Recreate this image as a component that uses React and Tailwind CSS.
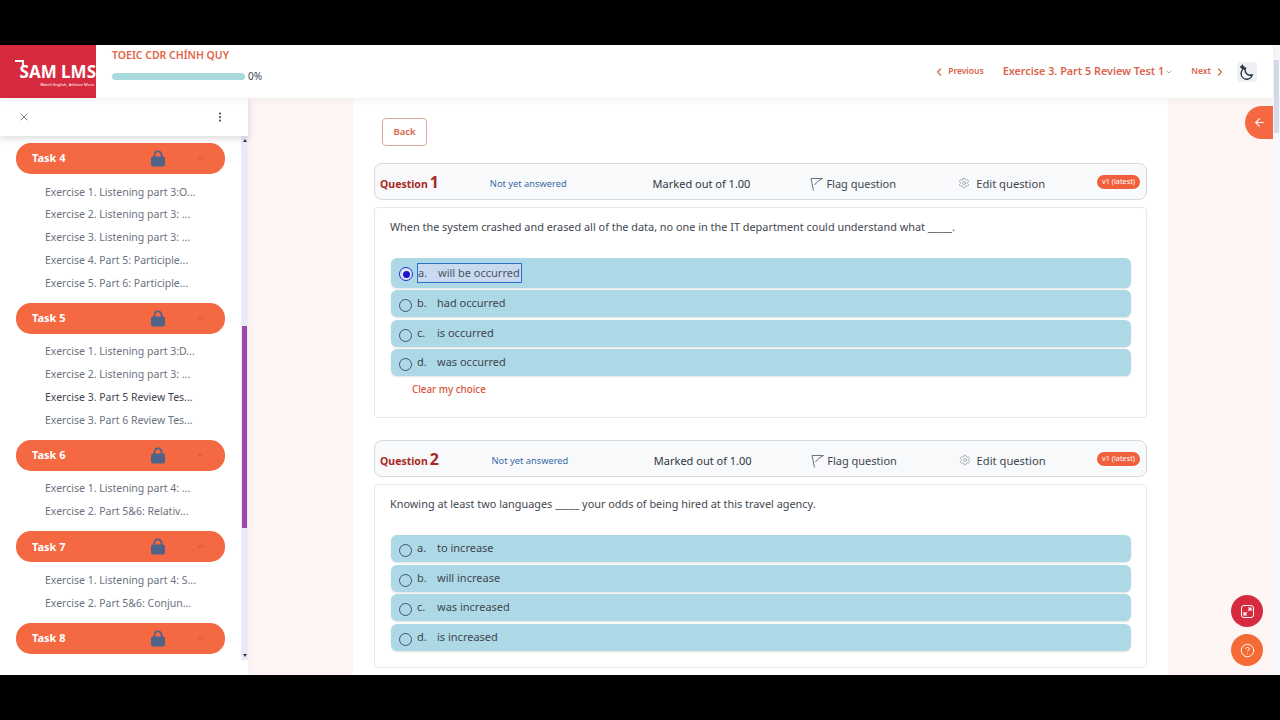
import { ArrowLeft, ChevronDown, ChevronLeft, ChevronRight, ChevronUp, CircleHelp, MoreVertical, Settings, X } from "lucide-react"

const tasks = [
  {
    name: "Task 4",
    items: ["Exercise 1. Listening part 3:O...", "Exercise 2. Listening part 3: ...", "Exercise 3. Listening part 3: ...", "Exercise 4. Part 5: Participle...", "Exercise 5. Part 6: Participle..."],
  },
  {
    name: "Task 5",
    items: ["Exercise 1. Listening part 3:D...", "Exercise 2. Listening part 3: ...", "Exercise 3. Part 5 Review Tes...", "Exercise 3. Part 6 Review Tes..."],
    active: 2,
  },
  { name: "Task 6", items: ["Exercise 1. Listening part 4: ...", "Exercise 2. Part 5&6: Relativ..."] },
  { name: "Task 7", items: ["Exercise 1. Listening part 4: S...", "Exercise 2. Part 5&6: Conjun..."] },
  { name: "Task 8", items: [] },
]

const questions = [
  {
    number: 1,
    text: "When the system crashed and erased all of the data, no one in the IT department could understand what _____.",
    options: ["will be occurred", "had occurred", "is occurred", "was occurred"],
    selected: 0,
  },
  {
    number: 2,
    text: "Knowing at least two languages _____ your odds of being hired at this travel agency.",
    options: ["to increase", "will increase", "was increased", "is increased"],
  },
]

function LockIcon() {
  return (
    <svg width="16" height="17" viewBox="0 0 16 17" fill="#4f6288">
      <path d="M4.5 7V4.8a3.5 3.5 0 0 1 7 0V7" fill="none" stroke="#4f6288" strokeWidth="1.8" />
      <rect x="1" y="6.5" width="14" height="10" rx="2" />
    </svg>
  )
}

function FlagIcon() {
  return (
    <svg width="13" height="14" viewBox="0 0 13 14" fill="none" stroke="#6b7280" strokeWidth="1">
      <path d="M3.5 13.5 1 1.5h11.5L7.5 4.5 4.5 8" />
    </svg>
  )
}

function MoonIcon() {
  return (
    <svg width="16" height="16" viewBox="0 0 24 24" fill="none" stroke="#1f2937" strokeWidth="2" strokeLinecap="round" strokeLinejoin="round">
      <path d="M10 6a7.5 7.5 0 0 0 10 10 8.5 8.5 0 1 1-10-10Z" />
      <path d="M5 2v5M2.5 4.500h5" strokeWidth="2.4" />
    </svg>
  )
}

function Radio({ checked }) {
  if (checked) {
    return (
      <span className="mt-[3px] flex h-[14px] w-[14px] shrink-0 items-center justify-center rounded-full border border-[#1d2bd8] bg-[#dfe6f8]">
        <span className="h-[7px] w-[7px] rounded-full bg-[#1a16c8]" />
      </span>
    )
  }
  return <span className="mt-1 h-[13px] w-[13px] shrink-0 rounded-full border border-[#3f5566]" />
}

function Sidebar() {
  return (
    <aside className="relative z-10 flex w-[248px] shrink-0 flex-col bg-white shadow-[2px_0_8px_rgba(0,0,0,0.04)]">
      <div className="z-10 flex h-[38px] shrink-0 items-center justify-between pl-[18px] pr-[22px] shadow-[0_3px_6px_rgba(0,0,0,0.12)]">
        <X size={12} strokeWidth={1.5} className="text-[#4b5563]" />
        <MoreVertical size={12} strokeWidth={2.5} className="text-[#4b5563]" />
      </div>
      <div className="flex h-[524px] overflow-hidden">
        <div className="w-[241px] shrink-0 pl-4 pr-4 pt-[7px]">
          {tasks.map((task) => (
            <div key={task.name} className="mb-[8px]">
              <div className="flex h-[31px] items-center rounded-[15px] bg-[#f46842] pl-[16px] text-[11px] font-bold text-white">
                <span className="w-[118px]">{task.name}</span>
                <LockIcon />
                <ChevronUp size={11} strokeWidth={2} className="ml-[29px] text-[#b9583c]" />
              </div>
              {task.items.length > 0 && (
                <div className="pl-[29px] pt-[7px]">
                  {task.items.map((item, i) => (
                    <div
                      key={item}
                      className={`flex h-[22.75px] items-center whitespace-nowrap text-[10.5px] ${i === task.active ? "text-[#3f4650]" : "text-[#6b7280]"}`}
                    >
                      {item}
                    </div>
                  ))}
                </div>
              )}
            </div>
          ))}
        </div>
        <div className="relative w-[7px] bg-[#e9e9f8]">
          <div className="absolute left-[2px] top-[3px] h-0 w-0 border-x-[2px] border-b-[3px] border-x-transparent border-b-[#33335a]" />
          <div className="absolute left-px top-[190px] h-[202px] w-[5px] bg-[#9b4aa8]" />
          <div className="absolute bottom-[3px] left-[2px] h-0 w-0 border-x-[2px] border-t-[3px] border-x-transparent border-t-[#33335a]" />
        </div>
      </div>
    </aside>
  )
}

function Question({ q }) {
  return (
    <section className="mb-[22px]">
      <div className="flex h-[37px] items-center rounded-lg border border-[#d5dae1] bg-[#f7f9fb] pl-[5px] pr-[6px] text-[11px] text-[#3f4650]">
        <span className={`flex items-baseline font-bold leading-none text-[#a82a23] ${q.number === 1 ? "w-[110px]" : "w-[112px]"}`}>
          <span className="text-[10.5px]">Question</span>
          <span className="ml-[2px] text-[16px]">{q.number}</span>
        </span>
        <span className="mt-[5px] w-[163px] text-[9.3px] text-[#3b69a8]">Not yet answered</span>
        <span className="mt-[6px] w-[158px] text-[#2f3640]">Marked out of 1.00</span>
        <span className="mt-[5px] flex w-[147px] items-center gap-[3px]">
          <FlagIcon />
          Flag question
        </span>
        <span className="mt-[5px] flex w-[140px] items-center gap-[6px] pl-px text-[11.2px]">
          <Settings size={12} strokeWidth={1} className="-mt-px text-[#6b7280]" />
          Edit question
        </span>
        <span className="ml-auto flex h-[14px] items-center whitespace-nowrap rounded-full bg-[#f0603c] px-[5px] text-[7.3px] text-white">v1 (latest)</span>
      </div>
      <div className="mt-[7px] rounded-sm border border-[#e6e8ec] bg-white px-[15px] pb-4 pt-[10px]">
        <p className="mb-[22px] h-[18px] whitespace-nowrap text-[10.88px] leading-[18px] text-[#3f4650]">{q.text}</p>
        <div className="ml-px flex flex-col gap-[2.5px]">
          {q.options.map((option, i) => (
            <div
              key={option}
              className={`flex items-center rounded-md bg-[#add8e6] pl-[8px] text-[11px] text-[#3f4650] shadow-[0_1px_2px_rgba(0,0,0,0.12)] ${q.selected === i ? "h-[29.5px]" : "h-[27px]"}`}
            >
              <Radio checked={q.selected === i} />
              <span
                className={`flex h-5 items-center pr-px ${q.selected === i ? "ml-[4px] border border-[#2f6fd0] bg-[#c9daf0] text-[#4a5563]" : "ml-[5px]"}`}
              >
                <span className="w-[20px]">{"abcd"[i]}.</span>
                <span>{option}</span>
              </span>
            </div>
          ))}
        </div>
        {q.selected !== undefined && (
          <>
            <div className="mt-[7px] pl-[22px] text-[9.8px] font-medium leading-[14px] text-[#d9553a]">Clear my choice</div>
            <div className="h-[4px]" />
          </>
        )}
      </div>
    </section>
  )
}

export default function App() {
  return (
    <div className="h-[720px] w-[1280px] overflow-hidden bg-black py-[45px] font-['Noto_Sans',sans-serif]">
      <div className="relative flex h-[630px] overflow-hidden bg-white">
        <div className="flex w-[1273px] shrink-0 flex-col">
          {/* Top bar */}
          <header className="z-20 flex h-[53px] shrink-0 items-center bg-white pr-[16px] shadow-[0_2px_8px_rgba(0,0,0,0.06)]">
            <div className="relative flex h-full w-[96px] shrink-0 flex-col items-end bg-[#d62b3f] pt-[17px] text-white">
              <svg width="14" height="9" viewBox="0 0 14 9" className="absolute left-[14px] top-[15px]" fill="none" stroke="#fff" strokeWidth="2">
                <path d="M1 1h8v5h4" />
              </svg>
              <div className="text-[17px] font-bold leading-[20px]">SAM LMS</div>
              <div className="pr-[2px] text-[4px] leading-[6px]">Watch English, Achieve More</div>
            </div>
            <div className="ml-4 self-start pt-[2px]">
              <div className="text-[10.5px] font-semibold leading-[16px] text-[#e2654a]">TOEIC CDR CHÍNH QUY</div>
              <div className="mt-[6px] flex items-center gap-[3px]">
                <div className="h-[7px] w-[133px] rounded-full bg-[#a8dadc]" />
                <span className="text-[10px] text-[#3f4650]">0%</span>
              </div>
            </div>
            <div className="ml-auto flex items-center text-[#d9654c]">
              <ChevronLeft size={12} strokeWidth={2.5} />
              <span className="ml-[3px] text-[8.5px] font-semibold">Previous</span>
              <span className="ml-[19px] text-[10.8px] font-semibold">Exercise 3. Part 5 Review Test 1</span>
              <ChevronDown size={8} className="ml-[1px]" />
              <span className="ml-[18px] text-[8.5px] font-semibold">Next</span>
              <ChevronRight size={12} strokeWidth={2.5} className="ml-[3px]" />
              <div className="ml-[11px] flex h-5 w-5 items-center justify-center rounded bg-[#eef0f3]">
                <MoonIcon />
              </div>
            </div>
          </header>

          <div className="flex min-h-0 flex-1">
            <Sidebar />
            <main className="min-w-0 flex-1 overflow-hidden bg-[#fdf6f5] pl-[105px]">
              <div className="h-full w-[815px] bg-white px-[21px] pt-[20px]">
                <button type="button" className="mb-[17px] ml-2 flex h-[28px] w-[45px] items-center justify-center rounded border border-[#d9a99c] text-[9.5px] font-semibold text-[#d9654c]">
                  Back
                </button>
                {questions.map((q) => (
                  <Question key={q.number} q={q} />
                ))}
              </div>
            </main>
          </div>
        </div>

        {/* Page scrollbar */}
        <div className="w-[7px] shrink-0 bg-[#f6f8f9] pl-px pt-[15px]">
          <div className="h-[73px] w-[5px] bg-[#d5dbea]" />
        </div>

        {/* Floating buttons */}
        <div className="absolute right-[7px] top-[61px] z-10 flex h-[33px] w-[28px] items-center justify-center rounded-l-full bg-[#f46842]">
          <ArrowLeft size={13} strokeWidth={2} className="text-white" />
        </div>
        <div className="absolute left-[1231px] top-[550px] z-10 flex h-8 w-8 items-center justify-center rounded-full bg-[#d62b3f]">
          <div className="flex h-[13px] w-[13px] items-center justify-center rounded-[3px] border-[1.5px] border-white">
            <svg width="9" height="9" viewBox="0 0 9 9" stroke="#fff" strokeWidth="1.2" fill="none">
              <path d="M5 1h3v3M8 1 5.2 3.8M4 8H1V5M1 8l2.8-2.8" />
            </svg>
          </div>
        </div>
        <div className="absolute left-[1231px] top-[589px] z-10 flex h-8 w-8 items-center justify-center rounded-full bg-[#f46b36]">
          <CircleHelp size={15} strokeWidth={1.5} className="text-white" />
        </div>
      </div>
    </div>
  )
}
